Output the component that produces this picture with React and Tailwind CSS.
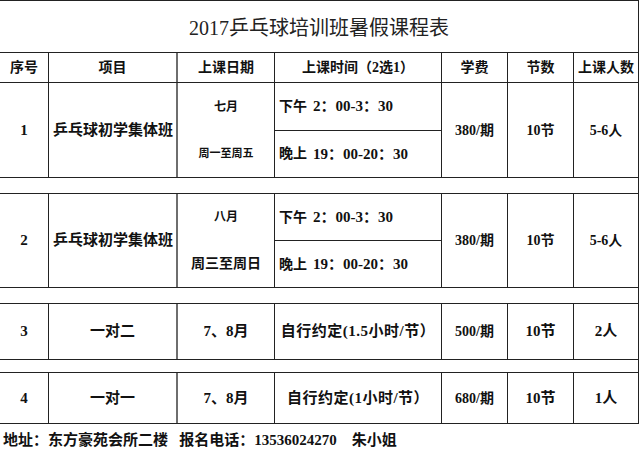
import React from "react";

const font = { fontFamily: '"Liberation Serif", "Noto Sans CJK SC", serif' };

const cols = "grid grid-cols-[48px_128px_98px_167px_66px_66px_65px]";
const cell = "flex items-center justify-center border-l border-[#222]";
const dateCell = "flex border-l-2 border-[#6e6e6e]";

const headers = ["序号", "项目", "上课日期", "上课时间（2选1）", "学费", "节数", "上课人数"];

const groupRows = [
  { no: "1", month: "七月", days: "周一至周五", daysSize: "text-[11px]", h: "h-[95px]" },
  { no: "2", month: "八月", days: "周三至周日", daysSize: "text-[14px]", h: "h-[94px]" },
];

const singleRows = [
  { no: "3", name: "一对二", time: "自行约定(1.5小时/节）", fee: "500/期", people: "2人", h: "h-[56px]" },
  { no: "4", name: "一对一", time: "自行约定(1小时/节）", fee: "680/期", people: "1人", h: "h-[52px] border-b" },
];

const Gap = ({ h }) => <div className={`${h} border-t border-[#222]`}></div>;

export default function App() {
  return (
    <div className="w-[642px] h-[456px] bg-white text-[#111] overflow-hidden" style={font}>
      <div className="w-[639px] border-r border-[#222]">
        {/* 标题 */}
        <div className="h-[52px] border-t border-[#222] flex items-center justify-center pt-[3px] text-[20px] text-[#222]">
          2017乒乓球培训班暑假课程表
        </div>

        {/* 表头 */}
        <div className={`${cols} h-[30px] border-t border-[#222] text-[14px] font-bold`}>
          {headers.map((h, i) => (
            <div
              key={h}
              className={i === 0 ? "flex items-center justify-center" : i === 2 ? `${dateCell} items-center justify-center` : cell}
            >
              {h}
            </div>
          ))}
        </div>

        {groupRows.map((r) => (
          <React.Fragment key={r.no}>
            <div className={`${cols} ${r.h} border-t border-[#222] font-bold`}>
              <div className="flex items-center justify-center text-[15px]">{r.no}</div>
              <div className={`${cell} !justify-start pl-[4px] text-[15px]`}>乒乓球初学集体班</div>
              <div className={`${dateCell} flex-col`}>
                <div className="flex-1 flex items-center justify-center text-[12px]">{r.month}</div>
                <div className={`flex-1 flex items-center justify-center ${r.daysSize}`}>{r.days}</div>
              </div>
              <div className="flex flex-col border-l border-[#222] text-[15px]">
                <div className="flex-1 flex items-center pl-[4px]">
                  <span className="text-[14px] mr-[6px]">下午</span>2：00-3：30
                </div>
                <div className="flex-1 flex items-center pl-[4px] border-t border-[#222]">
                  <span className="text-[14px] mr-[6px]">晚上</span>19：00-20：30
                </div>
              </div>
              <div className={`${cell} text-[14px]`}>380/期</div>
              <div className={`${cell} text-[14px]`}>10节</div>
              <div className={`${cell} text-[14px]`}>5-6人</div>
            </div>
            <Gap h="h-[16px]" />
          </React.Fragment>
        ))}

        {singleRows.map((r, i) => (
          <React.Fragment key={r.no}>
            <div className={`${cols} ${r.h} border-t border-[#222] font-bold`}>
              <div className="flex items-center justify-center text-[15px]">{r.no}</div>
              <div className={`${cell} text-[15px]`}>{r.name}</div>
              <div className={`${dateCell} items-center justify-center text-[15px]`}>7、8月</div>
              <div className={`${cell} text-[15px] tracking-[0.5px]`}>{r.time}</div>
              <div className={`${cell} text-[14px]`}>{r.fee}</div>
              <div className={`${cell} text-[15px]`}>10节</div>
              <div className={`${cell} text-[15px]`}>{r.people}</div>
            </div>
            {i === 0 && <Gap h="h-[13px]" />}
          </React.Fragment>
        ))}
      </div>

      {/* 地址 */}
      <div className="flex items-center h-[32px] pl-[3px] pt-[1px] text-[15px] font-bold whitespace-pre">
        地址：东方豪苑会所二楼   报名电话：13536024270    朱小姐
      </div>
    </div>
  );
}
